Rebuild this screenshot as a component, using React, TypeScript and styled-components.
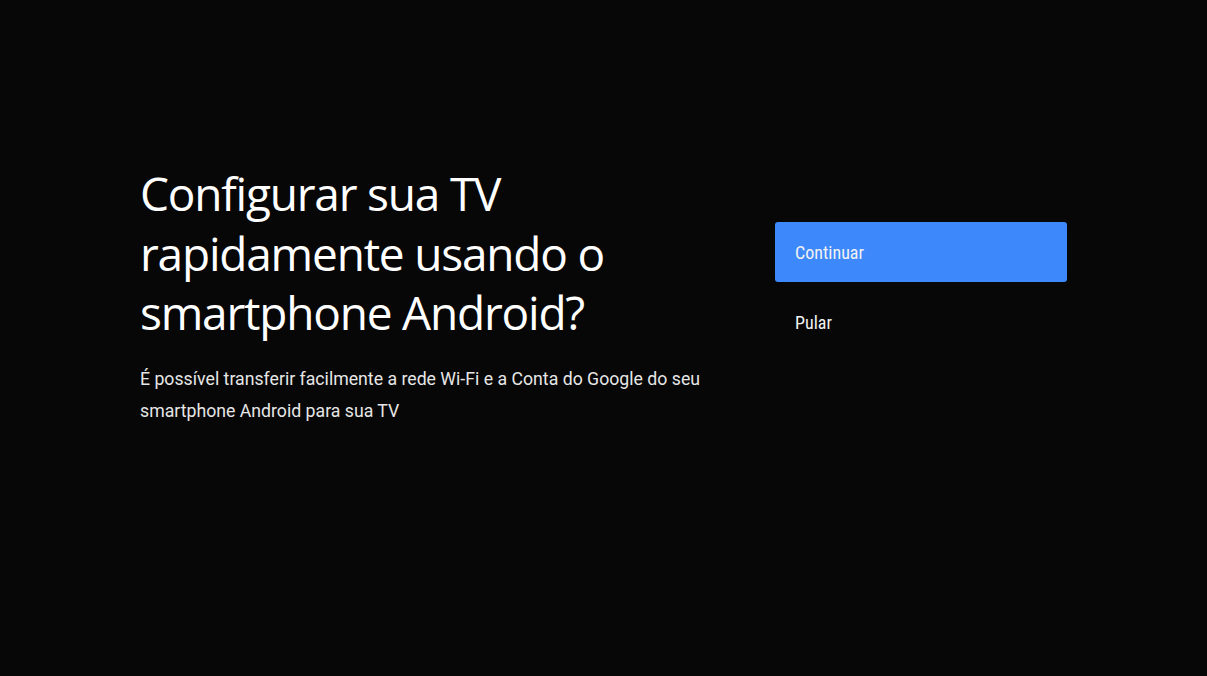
import React from 'react'
import styled, { createGlobalStyle } from 'styled-components'

const GlobalStyle = createGlobalStyle`
  html, body {
    margin: 0;
    padding: 0;
    background: #070707;
  }
`

const App = (): React.ReactElement => {
  return (
    <>
      <GlobalStyle />
      <Screen>
        <Info>
          <Title>Configurar sua TV rapidamente usando o smartphone Android?</Title>
          <Description>
            É possível transferir facilmente a rede Wi-Fi e a Conta do Google do seu smartphone Android para sua TV
          </Description>
        </Info>
        <Actions>
          <Action focused>Continuar</Action>
          <Action>Pular</Action>
        </Actions>
      </Screen>
    </>
  )
}

export default App

const Screen = styled.div`
  width: 1207px;
  height: 676px;
  box-sizing: border-box;
  background: #070707;
  display: flex;
  padding: 164px 0 0 140px;
`
const Info = styled.div`
  width: 575px;
  display: flex;
  flex-direction: column;
`
const Title = styled.h1`
  margin: 0;
  font-family: "Open Sans", "Noto Sans", sans-serif;
  font-weight: 400;
  font-size: 46px;
  line-height: 59.5px;
  letter-spacing: -1.2px;
  color: #ffffff;
`
const Description = styled.p`
  margin: 20px 0 0;
  font-family: Roboto, "Liberation Sans", sans-serif;
  font-size: 17.7px;
  line-height: 32px;
  color: #e6e6e6;
`
const Actions = styled.div`
  margin: 58px 0 0 60px;
  width: 292px;
  display: flex;
  flex-direction: column;
  gap: 10px;
`
const Action = styled.div<{ focused?: boolean }>`
  height: 60px;
  display: flex;
  align-items: center;
  padding-left: 20px;
  border-radius: 3px;
  background: ${p => (p.focused ? '#3d89fb' : 'transparent')};
  font-family: "Roboto Condensed", "Liberation Sans Narrow", Roboto, sans-serif;
  font-size: 18px;
  color: #f2f2f2;
`
